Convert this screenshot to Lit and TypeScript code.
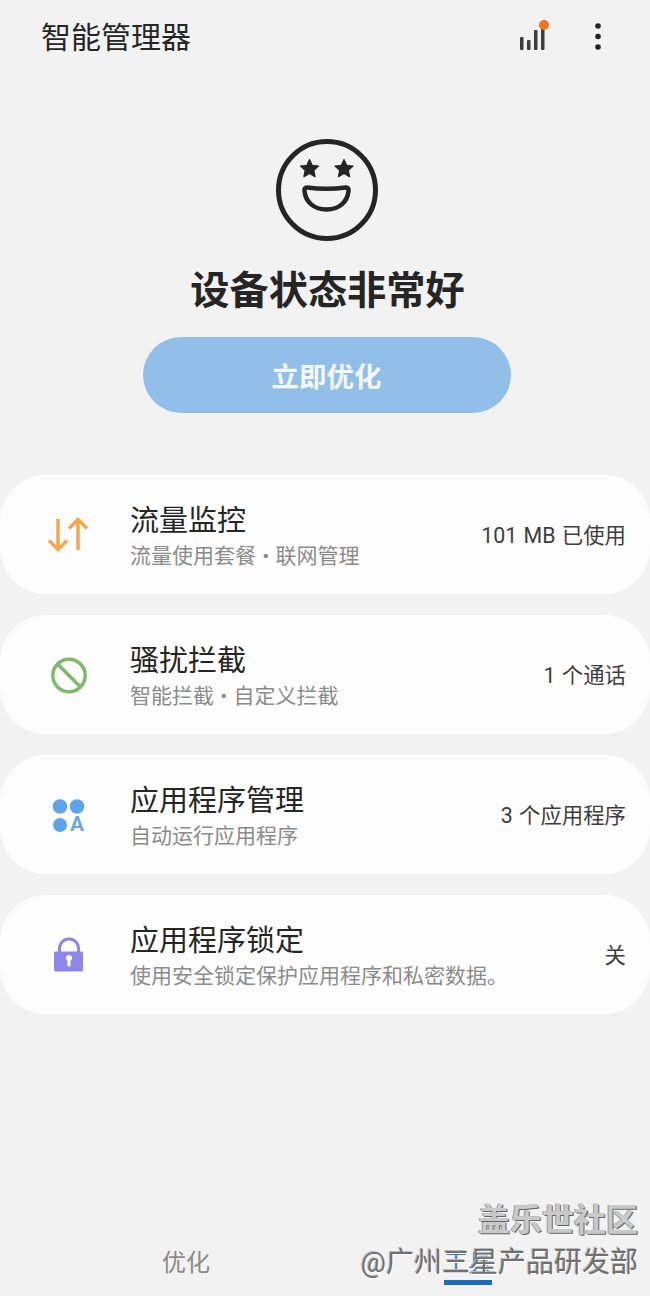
import { LitElement, css, html, svg } from 'lit'
import { customElement } from 'lit/decorators.js'

const icons = {
  data: svg`<path d="M14 8v30M5 29.500l9 9 9-9" /><path d="M34 39V9M25 17.500l9-9 9 9" />`,
  block: svg`<circle cx="25" cy="24.500" r="16.200" /><path d="M13.500 13l23 23" />`,
}

const rows = [
  { title: '流量监控', sub: '流量使用套餐 • 联网管理', value: '101 MB 已使用', icon: 'data' },
  { title: '骚扰拦截', sub: '智能拦截 • 自定义拦截', value: '1 个通话', icon: 'block' },
  { title: '应用程序管理', sub: '自动运行应用程序', value: '3 个应用程序', icon: 'apps' },
  { title: '应用程序锁定', sub: '使用安全锁定保护应用程序和私密数据。', value: '关', icon: 'lock' },
]

// five pointed star for the face eyes
const starPath = (cx: number, cy: number, outer: number, inner: number) => {
  const points = Array.from({ length: 10 }, (_, i) => {
    const radius = i % 2 ? inner : outer
    const angle = -Math.PI / 2 + (i * Math.PI) / 5
    return `${(cx + radius * Math.cos(angle)).toFixed(2)} ${(cy + radius * Math.sin(angle)).toFixed(2)}`
  })
  return `M${points.join('L')}Z`
}

@customElement('app-root')
export class AppRoot extends LitElement {
  static styles = css`
    :host {
      display: block;
      font-family: Roboto, "Noto Sans CJK SC", sans-serif;
      color: #252525;
    }
    .page {
      position: relative;
      width: 650px;
      height: 1296px;
      background: #f2f2f2;
      display: flex;
      flex-direction: column;
      overflow: hidden;
    }
    .header {
      height: 76px;
      display: flex;
      align-items: center;
      padding: 0 48px 0 41px;
    }
    .header h1 {
      flex: 1;
      margin: 0;
      font-size: 30px;
      font-weight: 400;
      line-height: 1;
    }
    .signal { width: 32px; height: 36px; margin-right: 45px; }
    .more { width: 8px; height: 30px; margin-bottom: 4px; }
    .hero {
      display: flex;
      flex-direction: column;
      align-items: center;
      padding: 62px 0 0 3px;
    }
    .face { width: 104px; height: 104px; display: block; }
    .hero h2 {
      margin: 20px 0 0 2px;
      font-size: 39.200px;
      line-height: 58px;
      font-weight: 700;
    }
    .cta {
      margin-top: 17px;
      width: 368px;
      height: 76px;
      border-radius: 38px;
      background: #92bfea;
      color: #f4f8fc;
      font-size: 27.500px;
      font-weight: 700;
      display: flex;
      align-items: center;
      justify-content: center;
    }
    .list {
      margin-top: 62px;
      display: flex;
      flex-direction: column;
      gap: 21px;
    }
    .row {
      height: 119px;
      border-radius: 46px;
      background: #fdfdfd;
      display: flex;
      align-items: center;
      padding: 0 24px 0 44px;
    }
    .icon { width: 48px; height: 48px; margin-right: 38px; flex: none; display: block; }
    .text { flex: 1; min-width: 0; padding-top: 2px; }
    .title { font-size: 29px; line-height: 40px; }
    .sub { font-size: 21px; line-height: 30px; color: #8b8b8b; word-spacing: 1px; }
    .value { font-size: 21.400px; color: #3d3d3d; white-space: nowrap; margin-bottom: 3px; word-spacing: 1px; }
    .tabs {
      margin-top: auto;
      height: 68px;
      display: flex;
      position: relative;
    }
    .tab {
      font-size: 24px;
      line-height: 34px;
      color: #8a8a8a;
      position: relative;
      padding-top: 18px;
    }
    .tab.first { margin-left: 162px; }
    .tab.active { margin-left: 234px; color: #2d7dc4; }
    .tab.active::after {
      content: '';
      position: absolute;
      left: 0;
      right: 0;
      top: 52px;
      height: 4.500px;
      background: #1a6dbb;
    }
    .mark {
      position: absolute;
      right: 12px;
      bottom: 14px;
      text-align: right;
      color: #707070;
      text-shadow: 1px 1px 0 #fff, -1px -1px 0 #bbb;
    }
    .mark .top {
      font-size: 32px;
      font-weight: 700;
      line-height: 48px;
      color: #c9c9c9;
      text-shadow: 1px 1px 0 #666, -1px 0 0 #999;
    }
    .mark .bottom { font-size: 28px; line-height: 38px; }
    .glyph { font-size: 21px; font-weight: 700; }
  `

  private renderIcon(name: string) {
    if (name === 'apps') {
      return html`<svg class="icon" viewBox="0 0 48 48">
        <g fill="#5ea3ec">
          <circle cx="16" cy="15.500" r="7.300" />
          <circle cx="33" cy="15.500" r="7.300" />
          <circle cx="16" cy="34" r="7" />
        </g>
        <text class="glyph" x="33" y="40" text-anchor="middle" fill="#6fa6e0">A</text>
      </svg>`
    }
    if (name === 'lock') {
      return html`<svg class="icon" viewBox="0 0 48 48">
        <path d="M15.500 21v-3.500a9.500 9.500 0 0 1 19 0V21" fill="none" stroke="#8f85ea" stroke-width="3" />
        <rect x="10" y="20.500" width="29" height="20" rx="1.500" fill="#8f85ea" />
        <circle cx="25" cy="27" r="3" fill="#fdfdfd" />
        <path d="M23.500 28h3v7.500h-3z" fill="#fdfdfd" />
      </svg>`
    }
    const stroke = name === 'data' ? '#f3a84f' : '#7fba6c'
    return html`<svg class="icon" viewBox="0 0 48 48" fill="none" stroke=${stroke} stroke-width="3.500">
      ${name === 'data' ? icons.data : icons.block}
    </svg>`
  }

  render() {
    return html`
      <div class="page">
        <div class="header">
          <h1>智能管理器</h1>
          <svg class="signal" viewBox="0 0 32 36">
            <g fill="#3c3c3c">
              <rect x="3" y="17" width="3.500" height="13" rx="1" />
              <rect x="10" y="20" width="3.500" height="10" rx="1" />
              <rect x="17" y="10" width="3.500" height="20" rx="1" />
              <rect x="24" y="6" width="3.500" height="24" rx="1" />
            </g>
            <circle cx="27" cy="5" r="5" fill="#ee7420" />
          </svg>
          <svg class="more" viewBox="0 0 8 30">
            <g fill="#222"><circle cx="4" cy="5" r="2.800" /><circle cx="4" cy="15.500" r="2.800" /><circle cx="4" cy="26" r="2.800" /></g>
          </svg>
        </div>
        <div class="hero">
          <svg class="face" viewBox="0 0 104 104">
            <circle cx="52" cy="52" r="48.500" fill="none" stroke="#252525" stroke-width="5" />
            <path d="${starPath(34.500, 31, 9.500, 4.600)}${starPath(69, 31, 9.500, 4.600)}" fill="#252525" stroke="#252525" stroke-width="1.200" stroke-linejoin="round" />
            <path d="M32 49.500Q51.500 52 71 49.500Q74 49.500 73.500 53C72.500 64 64 71.500 51.500 71.500S30.500 64 29.500 53Q29 49.500 32 49.500Z" fill="none" stroke="#252525" stroke-width="4.500" stroke-linejoin="round" />
          </svg>
          <h2>设备状态非常好</h2>
          <div class="cta">立即优化</div>
        </div>
        <div class="list">
          ${rows.map(row => html`
            <div class="row">
              ${this.renderIcon(row.icon)}
              <div class="text">
                <div class="title">${row.title}</div>
                <div class="sub">${row.sub}</div>
              </div>
              <div class="value">${row.value}</div>
            </div>
          `)}
        </div>
        <div class="tabs">
          <div class="tab first">优化</div>
          <div class="tab active">工具</div>
        </div>
        <div class="mark">
          <div class="top">盖乐世社区</div>
          <div class="bottom">@广州三星产品研发部</div>
        </div>
      </div>
    `
  }
}
